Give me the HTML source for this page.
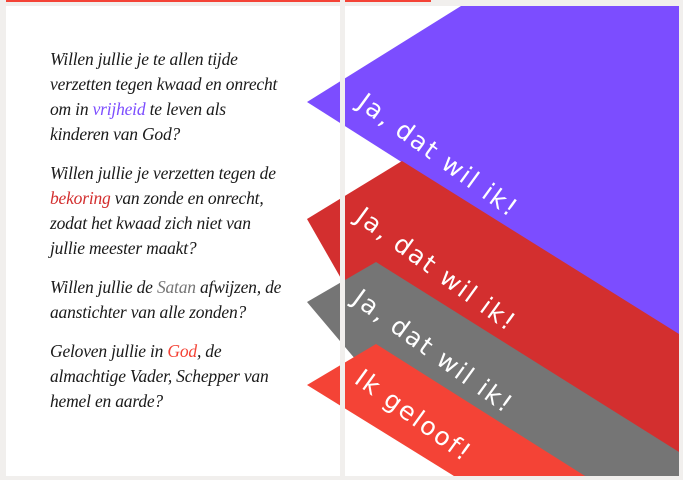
<!DOCTYPE html>
<html><head><meta charset="utf-8"><style>
html,body{margin:0;padding:0;}
body{width:683px;height:480px;background:#f1efed;position:relative;overflow:hidden;}
.panel{position:absolute;background:#fff;top:6px;height:470px;}
.txt{position:absolute;left:50px;font-family:"Liberation Serif",serif;font-style:italic;font-size:17.5px;line-height:25px;color:#1a1a1a;letter-spacing:-0.2px;}
.txt p{margin:0 0 14px 0;}
svg{position:absolute;left:0;top:0;}
</style></head><body>
<div style="position:absolute;left:6px;top:0;width:334px;height:2px;background:#f44336"></div>
<div style="position:absolute;left:345px;top:0;width:86px;height:2px;background:#f44336"></div>
<div class="panel" style="left:6px;width:334px"></div>
<div class="panel" style="left:345px;width:334px"></div>
<svg width="683" height="480">
<polygon points="307,102 461,6 679,6 679,338 " fill="#7c4dff"/>
<polygon points="307,219 402,161 679,334 679,476 454,476" fill="#d32f2f"/>
<polygon points="307,302 376,262 679,452 679,476 454,476" fill="#757575"/>
<polygon points="307,385 376,344 585,476 454,476" fill="#f44336"/>
<g font-family="'DejaVu Sans',sans-serif" font-size="25" fill="#fff" letter-spacing="2">
<text x="356" y="106" transform="rotate(36 356 106)">Ja, dat wil ik!</text>
<text x="354" y="220" transform="rotate(36 354 220)">Ja, dat wil ik!</text>
<text x="351" y="302" transform="rotate(36 351 302)">Ja, dat wil ik!</text>
<text x="353" y="382" transform="rotate(36 353 382)">Ik geloof!</text>
</g>
</svg>
<div style="position:absolute;left:340px;top:0;width:5px;height:480px;background:#f1efed"></div>
<div style="position:absolute;left:0;top:476px;width:683px;height:4px;background:#f1efed"></div>
<div style="position:absolute;left:679px;top:0;width:4px;height:480px;background:#f1efed"></div>
<div class="txt" style="top:47px">
<p>Willen jullie je te allen tijde<br>verzetten tegen kwaad en onrecht<br>om in <span style="color:#7c4dff">vrijheid</span> te leven als<br>kinderen van God?</p>
<p>Willen jullie je verzetten tegen de<br><span style="color:#d32f2f">bekoring</span> van zonde en onrecht,<br>zodat het kwaad zich niet van<br>jullie meester maakt?</p>
<p>Willen jullie de <span style="color:#757575">Satan</span> afwijzen, de<br>aanstichter van alle zonden?</p>
<p>Geloven jullie in <span style="color:#f44336">God</span>, de<br>almachtige Vader, Schepper van<br>hemel en aarde?</p>
</div>
</body></html>
